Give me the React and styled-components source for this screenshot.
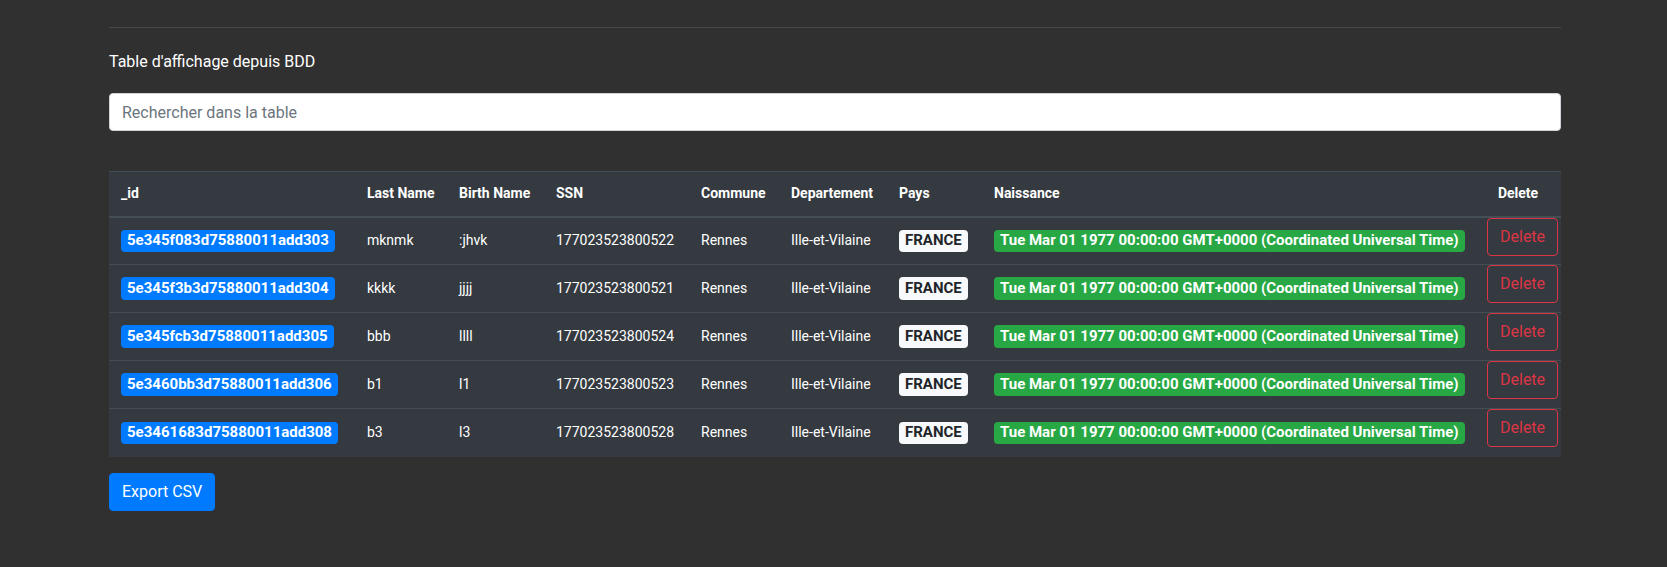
import React from "react";
import styled, { createGlobalStyle } from "styled-components";

const GlobalStyle = createGlobalStyle`
  html, body {
    margin: 0;
    padding: 0;
    background: #303030;
    font-family: Roboto, "Liberation Sans", Arial, sans-serif;
    color: #fff;
  }
  * { box-sizing: border-box; }
`;

const Page = styled.div`
  width: 1452px;
  margin-left: 109px;
  padding-top: 27px;
  padding-bottom: 40px;
`;

const Divider = styled.hr`
  margin: 0;
  border: 0;
  height: 1px;
  background: #474747;
`;

const Title = styled.div`
  margin-top: 22px;
  font-size: 16px;
  line-height: 24px;
  color: #fff;
`;

const SearchInput = styled.input`
  display: block;
  margin-top: 19px;
  width: 100%;
  height: 38px;
  padding: 6px 12px;
  font-family: inherit;
  font-size: 16px;
  line-height: 24px;
  color: #495057;
  background: #fff;
  border: 1px solid #ced4da;
  border-radius: 4px;
  outline: none;
  &::placeholder { color: #6c757d; }
`;

const Table = styled.table`
  margin-top: 40px;
  width: 100%;
  table-layout: fixed;
  border-collapse: collapse;
  background: #343a40;
  color: #fff;
  font-size: 14px;
`;

const Th = styled.th`
  height: 45px;
  padding: 0 12px;
  text-align: ${(p) => (p.$center ? "center" : "left")};
  font-weight: 700;
  line-height: 21px;
  vertical-align: middle;
  border-top: 1px solid #454d55;
  border-bottom: 2px solid #454d55;
  white-space: nowrap;
`;

const Tr = styled.tr`
  & + & td { border-top: 1px solid #454d55; }
`;

const Td = styled.td`
  height: 48px;
  padding: ${(p) => (p.$action ? "0 0 0 12px" : "0 12px")};
  vertical-align: ${(p) => (p.$action ? "top" : "middle")};
  line-height: 21px;
  white-space: nowrap;
`;

const Badge = styled.span`
  display: inline-block;
  padding: 3.75px 6px;
  font-size: 15px;
  font-weight: 700;
  line-height: 1;
  border-radius: 4px;
  white-space: nowrap;
  vertical-align: middle;
  background: ${(p) => p.$bg};
  color: ${(p) => p.$fg};
`;

const DeleteButton = styled.button`
  display: inline-block;
  height: 38px;
  padding: 6px 12px;
  font-family: inherit;
  font-size: 16px;
  line-height: 24px;
  color: #dc3545;
  background: transparent;
  border: 1px solid #dc3545;
  border-radius: 4px;
  cursor: pointer;
`;

const ExportButton = styled.button`
  display: block;
  margin-top: 16px;
  height: 38px;
  padding: 6px 12px;
  font-family: inherit;
  font-size: 16px;
  line-height: 24px;
  color: #fff;
  background: #007bff;
  border: 1px solid #007bff;
  border-radius: 4px;
  cursor: pointer;
`;

const columns = [
  { label: "_id", width: 246 },
  { label: "Last Name", width: 92 },
  { label: "Birth Name", width: 97 },
  { label: "SSN", width: 145 },
  { label: "Commune", width: 90 },
  { label: "Departement", width: 108 },
  { label: "Pays", width: 95 },
  { label: "Naissance", width: 493 },
  { label: "Delete", width: 86, center: true },
];

const DATE = "Tue Mar 01 1977 00:00:00 GMT+0000 (Coordinated Universal Time)";

const rows = [
  { id: "5e345f083d75880011add303", last: "mknmk", birth: ":jhvk", ssn: "177023523800522" },
  { id: "5e345f3b3d75880011add304", last: "kkkk", birth: "jjjj", ssn: "177023523800521" },
  { id: "5e345fcb3d75880011add305", last: "bbb", birth: "llll", ssn: "177023523800524" },
  { id: "5e3460bb3d75880011add306", last: "b1", birth: "l1", ssn: "177023523800523" },
  { id: "5e3461683d75880011add308", last: "b3", birth: "l3", ssn: "177023523800528" },
];

export default function App() {
  return (
    <>
      <GlobalStyle />
      <Page>
        <Divider />
        <Title>Table d'affichage depuis BDD</Title>
        <SearchInput placeholder="Rechercher dans la table" />
        <Table>
          <colgroup>
            {columns.map((c) => (
              <col key={c.label} style={{ width: c.width }} />
            ))}
          </colgroup>
          <thead>
            <tr>
              {columns.map((c) => (
                <Th key={c.label} $center={c.center}>{c.label}</Th>
              ))}
            </tr>
          </thead>
          <tbody>
            {rows.map((r) => (
              <Tr key={r.id}>
                <Td><Badge $bg="#007bff" $fg="#fff">{r.id}</Badge></Td>
                <Td>{r.last}</Td>
                <Td>{r.birth}</Td>
                <Td>{r.ssn}</Td>
                <Td>Rennes</Td>
                <Td>Ille-et-Vilaine</Td>
                <Td><Badge $bg="#f8f9fa" $fg="#212529">FRANCE</Badge></Td>
                <Td><Badge $bg="#28a745" $fg="#fff">{DATE}</Badge></Td>
                <Td $action><DeleteButton>Delete</DeleteButton></Td>
              </Tr>
            ))}
          </tbody>
        </Table>
        <ExportButton>Export CSV</ExportButton>
      </Page>
    </>
  );
}
